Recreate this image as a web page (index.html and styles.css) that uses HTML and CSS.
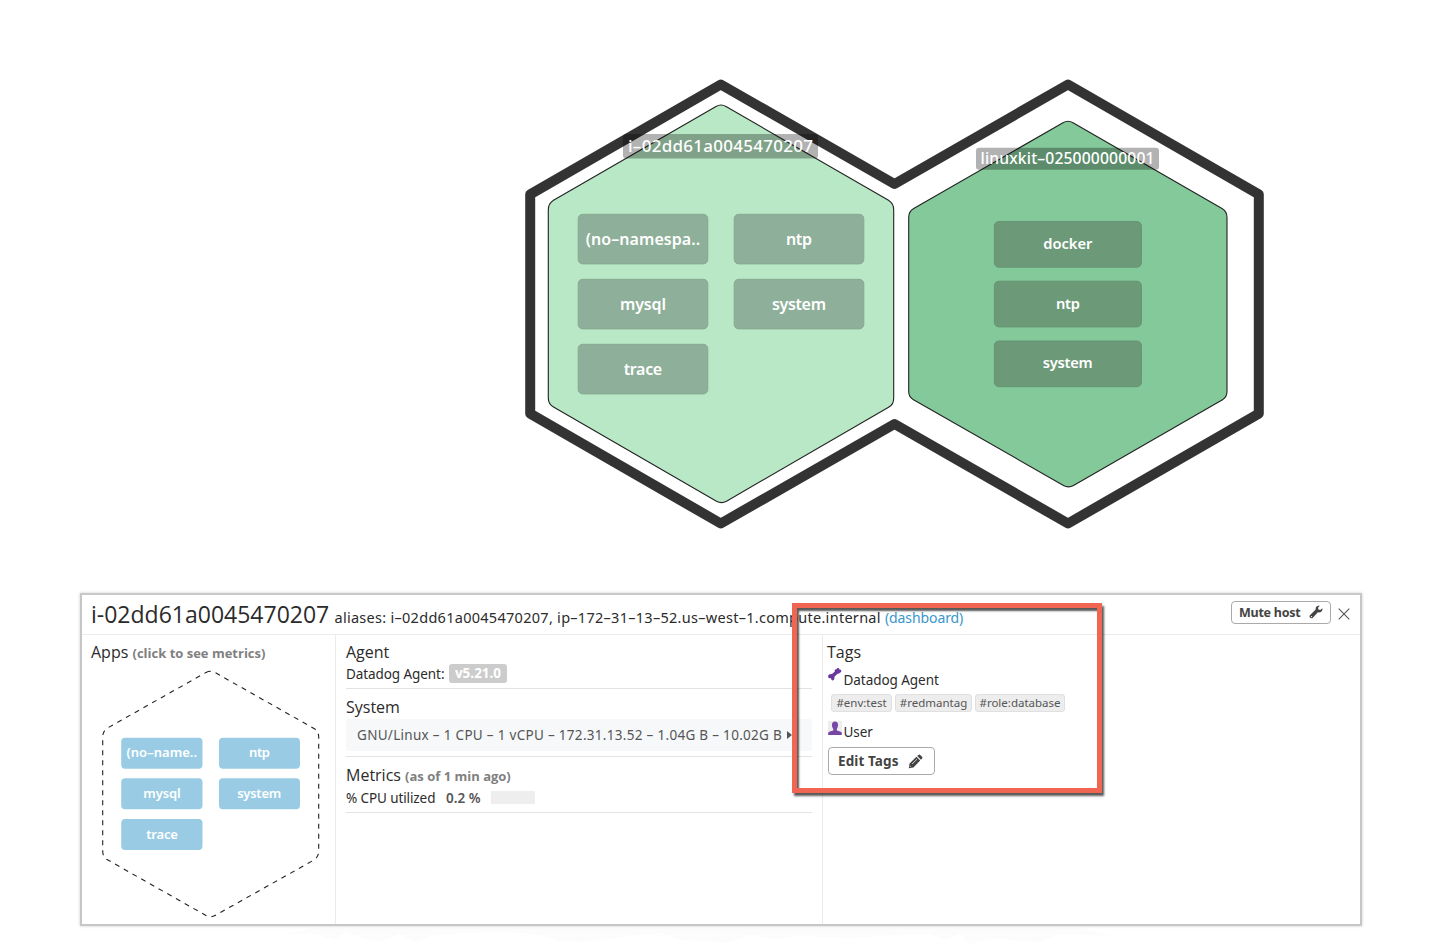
FILE: index.html
```html
<!DOCTYPE html>
<html lang="en">
<head>
<meta charset="utf-8">
<title>Host map</title>
<link rel="stylesheet" href="styles.css">
</head>
<body>
<main class="page">
  <svg class="hostmap" width="1440" height="593" viewBox="0 0 1440 593">
    <path class="group-outline" d="M530.2 194.3 L720.8 84.5 L894.5 184 L1068 84.5 L1258.8 194.3 V413.7 L1068 523.5 L894.5 424 L720.8 523.5 L530.2 413.7 Z"/>
    <path class="host host-light" d="M716 106.5 Q721 103.6 726 106.5 L888.500 200.300 Q893.700 203.500 893.700 210 V398 Q893.700 404.500 889 407 L726.500 501.200 Q721.500 504 716.500 501.200 L553.500 407 Q548.300 404 548.300 398 V210 Q548.300 203.500 553.500 200.300 Z"/>
    <path class="host host-dark" d="M1063 122.700 Q1068 119.800 1073 122.700 L1222 208.600 Q1227 211.500 1227 217.500 V391.500 Q1227 397 1222.500 399.700 L1073.500 485.500 Q1068.500 488.300 1063.500 485.500 L913.500 399.700 Q908.700 397 908.700 391.500 V217.500 Q908.700 211.500 913.700 208.600 Z"/>
    <rect class="label-bg" x="623" y="134" width="195" height="24.500" rx="3"/>
    <rect class="label-bg" x="976" y="147.700" width="183" height="22" rx="3"/>
    <g class="label">
      <text x="628" y="152.300" font-size="17" textLength="185">i–02dd61a0045470207</text>
      <text x="980.500" y="164" font-size="15.700" textLength="174">linuxkit–025000000001</text>
    </g>
    <g class="app-light">
      <rect x="578.200" y="214.300" width="129.600" height="49.600" rx="4.500"/>
      <rect x="734.200" y="214.300" width="129.600" height="49.600" rx="4.500"/>
      <rect x="578.200" y="279.300" width="129.600" height="49.600" rx="4.500"/>
      <rect x="734.200" y="279.300" width="129.600" height="49.600" rx="4.500"/>
      <rect x="578.200" y="344.300" width="129.600" height="49.600" rx="4.500"/>
    </g>
    <g class="app-dark">
      <rect x="994.400" y="221.500" width="147" height="45.700" rx="4.500"/>
      <rect x="994.400" y="281.200" width="147" height="45.700" rx="4.500"/>
      <rect x="994.400" y="341" width="147" height="45.700" rx="4.500"/>
    </g>
    <g class="app-text" font-size="16">
      <text x="585.700" y="244.800" textLength="114.500">(no–namespa..</text>
      <text x="786" y="244.800" textLength="26">ntp</text>
      <text x="620" y="309.500" textLength="46">mysql</text>
      <text x="772" y="309.500" textLength="54">system</text>
      <text x="623.700" y="374.500" textLength="38.500">trace</text>
    </g>
    <g class="app-text" font-size="14.700">
      <text x="1043.300" y="249.200" textLength="49">docker</text>
      <text x="1056" y="309" textLength="24">ntp</text>
      <text x="1042.700" y="368.400" textLength="50">system</text>
    </g>
  </svg>

  <section class="panel">
    <header class="panel-head">
      <h1 class="title">i-02dd61a0045470207</h1>
      <p class="aliases">aliases: i–02dd61a0045470207, ip–172–31–13–52.us–west–1.compute.internal</p>
      <a class="dash-link">(dashboard)</a>
      <button class="button mute">Mute host
        <svg width="14" height="14" viewBox="0 0 14 14"><path d="M13.300 3.200 L11.300 5 L9.400 4.500 L9 2.700 L10.800 .8 C8.500 .1 6.200 1.700 6.700 4.500 L.9 10.200 C-.4 11.800 1.800 14.200 3.600 12.900 L8.900 7.300 C11.900 8 14.100 5.500 13.300 3.200 Z" fill="#444"/><circle cx="2.500" cy="11.600" r=".7" fill="#fff"/></svg>
      </button>
      <svg class="close" width="12" height="12" viewBox="0 0 12 12"><path d="M.7 .7 L11.300 11.300 M11.300 .7 L.7 11.300" stroke="#555" stroke-width="1.100"/></svg>
    </header>
    <div class="columns">
      <div class="col col-apps">
        <h2 class="heading">Apps <small class="note note-apps">(click to see metrics)</small></h2>
        <svg class="apps" width="222" height="254" viewBox="100 667 222 254">
          <path class="apps-outline" d="M206 672.500 Q210.500 670 215 672.500 L314 728.500 Q318.700 731.500 318.700 737 V851 Q318.700 857 314 860 L215 915.500 Q210.500 918 206 915.500 L107 859.500 Q102.700 857 102.700 851 V737 Q102.700 731 107.500 728 Z"/>
          <g class="app-blue">
            <rect x="121.200" y="737.700" width="81.300" height="31" rx="4"/>
            <rect x="219" y="737.700" width="81" height="31" rx="4"/>
            <rect x="121.200" y="778.300" width="81.300" height="31" rx="4"/>
            <rect x="219" y="778.300" width="81" height="31" rx="4"/>
            <rect x="121.200" y="819" width="81.300" height="31" rx="4"/>
          </g>
          <g class="app-text" font-size="13">
            <text x="126.500" y="757.300" textLength="70.500">(no–name..</text>
            <text x="249" y="757.300" textLength="21">ntp</text>
            <text x="143.300" y="798.300" textLength="37.500">mysql</text>
            <text x="237.200" y="798.300" textLength="44">system</text>
            <text x="146.300" y="839" textLength="31.500">trace</text>
          </g>
        </svg>
      </div>
      <div class="col col-info">
        <div class="block block-agent">
          <h2 class="heading">Agent</h2>
          <p class="line line-agent"><span class="agent-name">Datadog Agent:</span> <span class="version">v5.21.0</span></p>
        </div>
        <div class="block block-system">
          <h2 class="heading">System</h2>
          <p class="system"><span class="system-text">GNU/Linux – 1 CPU – 1 vCPU – 172.31.13.52 – 1.04G B – 10.02G B</span><span class="arrow"></span></p>
        </div>
        <div class="block block-metrics">
          <h2 class="heading">Metrics <small class="note">(as of 1 min ago)</small></h2>
          <p class="line"><span class="cpu">% CPU utilized</span><b class="cpu-value">0.2 %</b><span class="meter"></span></p>
        </div>
      </div>
      <div class="col col-tags">
        <h2 class="heading">Tags</h2>
        <p class="source source-agent"><svg width="16" height="16" viewBox="0 0 16 16"><path d="M1.200 10 C.6 8 2.500 6.700 5 7 L7.800 4.500 C7.400 2.600 8.300 1.800 9.600 2.300 C10 .4 12.500 .6 12.300 2.500 C14.600 2.500 15 4.700 13.300 5.500 C12.500 6 11.800 6.800 10.600 6.800 L7.400 9.700 C7.700 11.500 7.200 13.400 5.700 13.400 C4.500 13.400 4.200 12.300 4 11.200 C2.600 11.500 1.400 11.200 1.200 10 Z" fill="#68389c"/></svg><span>Datadog Agent</span></p>
        <div class="tags"><span class="tag">#env:test</span><span class="tag">#redmantag</span><span class="tag">#role:database</span></div>
        <p class="source source-user"><svg width="16" height="16" viewBox="0 0 16 16"><path d="M1 1h14v14H1z" fill="#eeeef0"/><path d="M1.200 15 V12.500 C2.500 11.300 5 11 6.300 10.500 V9 C4.400 6.500 4.200 1.500 8 1.500 C11.800 1.500 11.600 6.500 9.800 9 V10.500 C11 11 13.500 11.300 14.800 12.500 V15 Z" fill="#7847a5"/></svg><span>User</span></p>
        <button class="button edit">Edit Tags
          <svg width="15" height="15" viewBox="0 0 15 15"><path d="M.8 14.200 L1.600 9.600 L8.400 2.800 L12.200 6.600 L5.400 13.400 Z M9.200 2 L10.500 .9 Q11.500 .2 12.500 1.200 L13.800 2.500 Q14.800 3.500 14.100 4.500 L13 5.800 Z" fill="#444"/><path d="M4 10 L9 5.200 M2 12.100 L3 13.100" stroke="#fff" stroke-width=".7"/></svg>
        </button>
      </div>
    </div>
    <div class="highlight"></div>
  </section>

  <svg class="haze" width="1440" height="19" viewBox="0 0 1440 19"><path fill="#fcfcfc" d="M285 9 L310 7 L335 14 L345 6 L365 13 L380 16 L400 8 L415 17 L435 9 L460 7 L500 6 L535 8 L560 15 L585 16 L615 12 L640 9 L660 7 L680 14 L705 15 L728 17 L750 9 L775 13 L800 10 L850 12 L900 9 L930 8 L945 14 L960 8 L970 18 L995 12 L1020 15 L1040 16 L1060 8 L1110 10 L1080 2 L310 2 Z"/></svg>
</main>
</body>
</html>
```
FILE: styles.css
```css
* { box-sizing: border-box; }
body { margin: 0; background: #fff; color: #2b2b2b; font-family: "Noto Sans", "Open Sans", sans-serif; }
h1, h2, p { margin: 0; font-weight: 400; }
svg { display: block; flex: none; }
.page { width: 1440px; height: 945px; overflow: hidden; }

.group-outline { fill: none; stroke: #333; stroke-width: 10; stroke-linejoin: round; }
.host { stroke: #222; stroke-width: 1.1; }
.host-light { fill: #b8e8c5; }
.host-dark { fill: #84c99a; }
.label-bg { fill: rgba(0, 0, 0, .3); }
.label { fill: #fff; font-weight: 500; }
.app-light rect { fill: #8eaf99; stroke: #88a892; stroke-width: 1; }
.app-dark rect { fill: #6c9a79; stroke: #679474; stroke-width: 1; }
.app-text { fill: #fff; font-weight: 600; }

.panel { position: relative; width: 1282px; height: 333px; margin-left: 80px; border: 2px solid #c6c6c6; border-top-color: #c9c9c9; box-shadow: 0 0 3px rgba(0, 0, 0, .2); background: #fff; }
.panel-head { display: flex; align-items: baseline; height: 40px; padding: 0 10px 0 9px; border-bottom: 1px solid #ebebeb; white-space: nowrap; }
.title { font: 400 23px/39px "Open Sans", sans-serif; width: 243.500px; }
.aliases { font-size: 14.5px; letter-spacing: .28px; width: 550.500px; }
.dash-link { font-size: 14px; letter-spacing: -.1px; color: #3a96cc; }
.button { display: flex; align-items: center; justify-content: space-between; background: #fff; border: 1px solid #aaa; border-radius: 4px; color: #444; font: 700 12.5px "Noto Sans", sans-serif; white-space: nowrap; }
.mute { align-self: flex-start; margin: 6px 7px 0 auto; width: 100px; height: 23px; padding: 0 7px 1px; letter-spacing: -.2px; }
.mute { letter-spacing: -.25px; }
.close { align-self: flex-start; margin-top: 12.500px; }

.columns { display: flex; height: 289px; }
.col { padding-top: 6px; }
.col-apps { width: 254px; padding-left: 9px; border-right: 1px solid #ebebeb; }
.col-info { width: 487px; padding-left: 10px; padding-right: 10px; border-right: 1px solid #ebebeb; }
.col-tags { padding-left: 4px; }
.heading { font: 400 16px/22px "Open Sans", sans-serif; white-space: nowrap; }
.note { font-size: 13px; font-weight: 700; color: #808080; }
.apps { margin: 3px 0 0 9px; }
.apps-outline { fill: none; stroke: #222; stroke-width: 1.1; stroke-dasharray: 5 5; }
.app-blue rect { fill: #99cce4; }

.block { width: 466px; border-bottom: 1px solid #e2e2e2; }
.block-agent { height: 48px; }
.block-system { height: 68px; padding-top: 7px; }
.block-metrics { height: 56px; padding-top: 7px; }
.line { display: flex; align-items: center; height: 21px; font-size: 13.5px; white-space: nowrap; }
.agent-name { width: 103px; letter-spacing: -.08px; }
.version { width: 58px; height: 19px; border-radius: 3px; background: #ccc; color: #fff; font: 700 13.5px/18px "Noto Sans", sans-serif; text-align: center; }
.system { display: flex; align-items: center; height: 32px; margin-top: 1px; padding-left: 11px; border-radius: 3px; background: #f6f8fa; color: #555; font-size: 13.5px; white-space: nowrap; }
.system-text { width: 430px; letter-spacing: .3px; }
.arrow { border-left: 5px solid #555; border-top: 4px solid transparent; border-bottom: 4px solid transparent; }
.cpu { width: 100px; letter-spacing: -.1px; }
.cpu-value { width: 45px; color: #555; font-weight: 600; }
.meter { width: 44px; height: 13px; background: #eee; }

.source { display: flex; height: 20px; font-size: 13.5px; line-height: 20px; }
.source span { letter-spacing: -.05px; margin-left: .5px; }
.source-agent { margin-top: 7px; }
.source-agent svg { margin-top: -3px; }
.source-user { margin-top: 10px; }
.source-user svg { margin-top: -2px; }
.tags { display: flex; gap: 3px; margin: 4px 0 0 4px; }
.tag { height: 18px; border: 1px solid #e0e0e0; border-radius: 3px; background: #ededed; color: #555; font-size: 11.5px; line-height: 16px; text-align: center; white-space: nowrap; }
.tag:nth-child(1) { width: 61px; }
.tag:nth-child(2) { width: 77px; }
.tag:nth-child(3) { width: 90px; }
.edit { width: 107px; height: 28px; margin: 5px 0 0 1px; padding: 0 11px 0 9px; font-size: 13.5px; letter-spacing: .1px; }
.highlight { position: absolute; left: 710px; top: 8px; width: 310px; height: 190px; border: 5px solid #f16553; box-shadow: 2px 3px 2px rgba(0, 0, 0, .65), inset 2px 3px 2px rgba(0, 0, 0, .65); }
```
